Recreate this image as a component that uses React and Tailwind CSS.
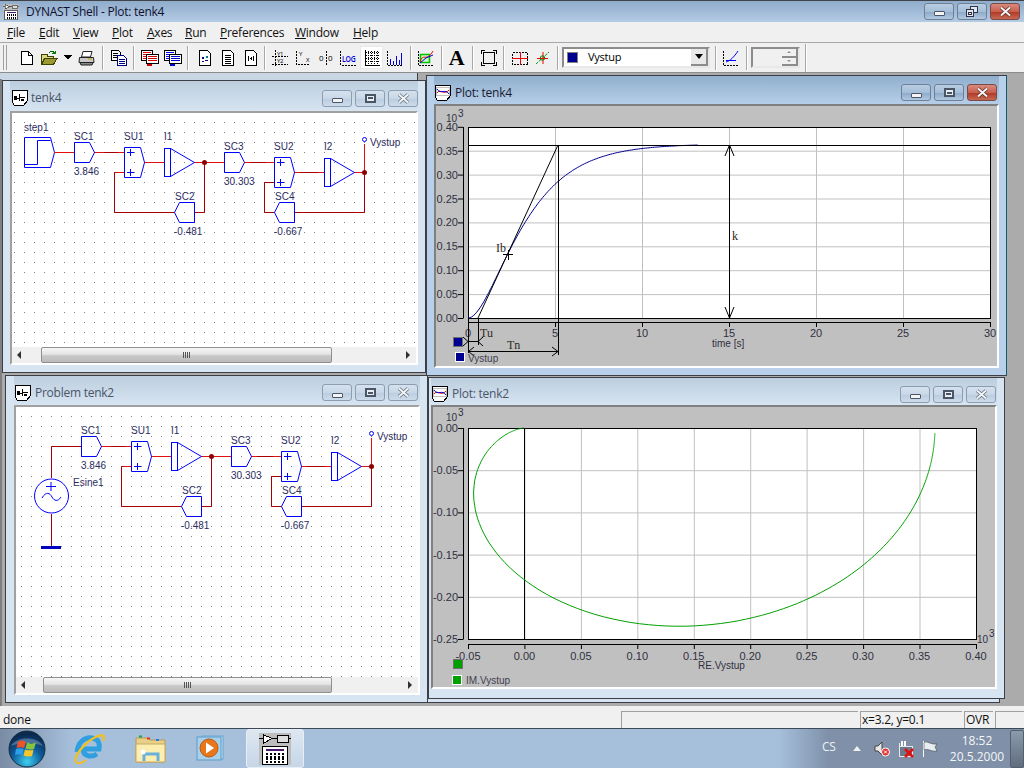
import React from 'react';

const K = 0.364;
const T1 = 2.08;
const T2 = 1.5;

// step response of the two lags, drawn in screen coordinates of the plot
const stepPath = () => {
  let d = '';
  for (let t = 0; t <= 13.2; t += 0.1) {
    const y = K * (1 - (T1 * Math.exp(-t / T1) - T2 * Math.exp(-t / T2)) / (T1 - T2));
    d += `${d ? 'L' : 'M'}${(468 + t * 17.4).toFixed(1)} ${(318 - y * 478).toFixed(1)}`;
  }
  return d;
};

// frequency response for the Nyquist plot
const nyquistPath = () => {
  let d = '';
  for (let lw = Math.log(0.0046); lw <= Math.log(30); lw += 0.03) {
    const w = Math.exp(lw);
    const re = 1 - T1 * T2 * w * w;
    const im = (T1 + T2) * w;
    const m = re * re + im * im;
    const gr = (K * re) / m;
    const gi = (-K * im) / m;
    d += `${d ? 'L' : 'M'}${(524 + gr * 1129).toFixed(1)} ${(428 - gi * 844).toFixed(1)}`;
  }
  return d;
};

const Ico = ({ children, w = 16, h = 16 }) => (
  <svg width={w} height={h} viewBox={`0 0 ${w} ${h}`} shapeRendering="crispEdges">{children}</svg>
);

const Btn = ({ children, active }) => (
  <div className={active ? 'w-[23px] h-[23px] flex items-center justify-center bg-white border border-[#e8e8e8]' : 'w-[23px] h-[23px] flex items-center justify-center'}>
    {children}
  </div>
);

const Sep = ({ className }) => <div className={`w-px h-[24px] bg-[#a8a8a8] border-r border-white box-content ${className}`} />;

const Page = ({ lines }) => (
  <g>
    <path d="M2.5 .5H10.5L13.5 3.5V15.5H2.5Z" fill="#fff" stroke="#000" />
    {lines}
  </g>
);

const Lines = ({ color, x = 5, n = 4, w = 6 }) => (
  <g stroke={color}>
    {Array.from({ length: n }).map((_, i) => (
      <path key={i} d={`M${x} ${5.5 + i * 2}h${w}`} />
    ))}
  </g>
);

const StackDoc = ({ color, dark }) => (
  <Ico w={18} h={16}>
    <path d="M.5 .5H11.5V10.5H.5Z" fill="#fff" stroke="#000" />
    <g stroke={color}><path d="M2 2.5H10M2 4.5H10M2 6.5H10M2 8.5H10" /></g>
    <path d="M5.5 4.5H17.5V13.5H5.5Z" fill="#fff" stroke="#000" />
    <g stroke={dark}><path d="M7 6.5H16M7 8.5H16M7 10.5H16" /></g>
    <path d="M6 14h5v2H6z" fill={dark} />
  </Ico>
);

const ToolIcons = {
  New: () => (
    <Ico><path d="M2.5 1.5H9.5L13.5 5.5V14.5H2.5Z" fill="#fff" stroke="#000" /><path d="M9.5 1.5V5.5H13.5" fill="none" stroke="#000" /></Ico>
  ),
  Open: () => (
    <Ico w={17} h={16}>
      <path d="M.5 4.5H6.5V6.5H12.5V14.5H.5Z" fill="#d8d880" stroke="#404000" />
      <path d="M3.5 8.5H16L12.5 14.5H.5Z" fill="#9a9a30" stroke="#404000" />
      <path d="M8 3C9 1 12 1 13 2.5" fill="none" stroke="#006000" />
      <path d="M11 3.5h4v-3z" fill="#008000" />
    </Ico>
  ),
  Drop: () => <Ico w={8} h={5}><path d="M0 0H8L4 5Z" fill="#000" /></Ico>,
  Print: () => (
    <svg width="17" height="16" viewBox="0 0 17 16">
      <path d="M5 1.5H14L12.5 7H3.5Z" fill="#fff" stroke="#222" />
      <path d="M1.5 7.5H15.5L16 12.5H1Z" fill="#c8c8c8" stroke="#222" />
      <path d="M2 12.5H15L14 15H3Z" fill="#888" stroke="#222" />
      <path d="M10 9h4" stroke="#c8a000" />
    </svg>
  ),
  Copy: () => (
    <Ico>
      <path d="M.5 .5H7.5L9.5 2.5V10.5H.5Z" fill="#fff" stroke="#000" />
      <path d="M2 3.5H7M2 5.5H7M2 7.5H7" stroke="#000" />
      <path d="M6.5 5.5H12.5L15.5 8.5V15.5H6.5Z" fill="#fff" stroke="#000081" />
      <path d="M8 9.5H14M8 11.5H14M8 13.5H14" stroke="#000081" />
    </Ico>
  ),
  Red: () => <StackDoc color="#ff0000" dark="#d00000" />,
  Blue: () => <StackDoc color="#0000ff" dark="#0000d0" />,
  D1: () => (
    <Ico><Page lines={<g><path d="M5 7h2v2H5zM8 10h3v1H8zM5 11h2v1H5z" fill="#0a0a80" /><path d="M9 6h2v2H9z" fill="#008080" /></g>} /></Ico>
  ),
  D2: () => <Ico><Page lines={<Lines color="#000" n={5} />} /></Ico>,
  D3: () => (
    <Ico><Page lines={<path d="M5.5 6V11M10.5 6V11M7 8.5H9M8 7V10" stroke="#000" fill="none" />} /></Ico>
  ),
  Y1Y2: () => (
    <svg width="16" height="16" viewBox="0 0 16 16" shapeRendering="crispEdges">
      <path d="M0 6.5H16M0 14.5H16M3.5 0V16" stroke="#000" strokeDasharray="2 1" />
      <text x="5" y="5.5" fontSize="6" fill="#000">Y1</text>
      <text x="5" y="13" fontSize="6" fill="#000">Y2</text>
    </svg>
  ),
  Axes: () => (
    <svg width="16" height="16" viewBox="0 0 16 16" shapeRendering="crispEdges">
      <path d="M1.5 1V14.5H15" stroke="#000" fill="none" strokeDasharray="2 1" />
      <text x="4" y="6" fontSize="6" fill="#000">Y</text>
      <text x="11" y="12" fontSize="6" fill="#000">X</text>
    </svg>
  ),
  Zero: () => (
    <svg width="16" height="16" viewBox="0 0 16 16" shapeRendering="crispEdges">
      <path d="M8.5 1V15" stroke="#000" strokeDasharray="2 1" />
      <text x="1" y="11" fontSize="8" fill="#000">0</text>
      <text x="10" y="11" fontSize="8" fill="#000">0</text>
    </svg>
  ),
  Log: () => (
    <svg width="18" height="16" viewBox="0 0 18 16">
      <path d="M.5 1V15H17" stroke="#000" fill="none" strokeDasharray="2 1" shapeRendering="crispEdges" />
      <text transform="translate(2,12) scale(.72,1)" fontSize="9.5" fontWeight="600" fill="#0000e0">LOG</text>
    </svg>
  ),
  Grid: () => (
    <Ico>
      <path d="M1.5 0V15.5H16" stroke="#000" fill="none" />
      <g stroke="#000" strokeDasharray="1 1">
        <path d="M4.5 1V15M7.5 1V15M10.5 1V15M13.5 1V15" />
        <path d="M2 2.5H16M2 5.5H16M2 8.5H16M2 11.5H16" />
      </g>
    </Ico>
  ),
  Bars: () => (
    <Ico>
      <path d="M.5 1V15.5H16" stroke="#000" fill="none" strokeDasharray="2 1" />
      <path d="M3.5 9V15M6.5 11V15M9.5 6V15M12.5 10V15M14.5 3V15" stroke="#0000e0" strokeWidth="1.5" fill="none" />
    </Ico>
  ),
  Color: () => (
    <svg width="16" height="16" viewBox="0 0 16 16">
      <path d="M.5 1V15.5H16" stroke="#000" fill="none" strokeDasharray="2 1" shapeRendering="crispEdges" />
      <path d="M2.500 4.500H11.500V12.500H2.500Z" fill="#c8f8c8" stroke="#00c000" strokeWidth="1.5" />
      <path d="M2 12C5 2 8 13 15 1" stroke="#ff0000" fill="none" />
      <path d="M2 13L8 8L15 5" stroke="#0000e0" fill="none" />
    </svg>
  ),
  Frame: () => (
    <Ico>
      <path d="M2.5 2.5H13.5V13.5H2.5Z" fill="none" stroke="#000" strokeWidth="1" />
      <path d="M0 0h4v1H1v3H0zM12 0h4v4h-1V1h-3zM0 12h1v3h3v1H0zM15 12h1v4h-4v-1h3z" fill="#000" />
    </Ico>
  ),
  Cross: () => (
    <Ico>
      <path d="M.5 2.5H15.5V14.5H.5Z" fill="none" stroke="#000" strokeDasharray="2 1" />
      <path d="M8 2V15M0 8.5H16" stroke="#f00000" strokeWidth="1" />
    </Ico>
  ),
  Mark: () => (
    <svg width="14" height="14" viewBox="0 0 14 14">
      <path d="M0 13L13 1" stroke="#00a000" strokeDasharray="3 1" />
      <path d="M1 7.5H12M7 1V13" stroke="#ff0000" />
      <circle cx="6.5" cy="7" r="2.2" fill="none" stroke="#008000" />
    </svg>
  ),
  Slope: () => (
    <svg width="16" height="16" viewBox="0 0 16 16">
      <path d="M.5 1V15.5H16" stroke="#000" fill="none" strokeDasharray="2 1" shapeRendering="crispEdges" />
      <path d="M3 12C7 11 11 7 15 1" stroke="#0000ff" fill="none" />
      <path d="M3 10.5H13" stroke="#0000ff" />
    </svg>
  ),
};

const TitleIcon = ({ plot }) => (
  <svg width="16" height="16" viewBox="0 0 16 16" className="shrink-0" shapeRendering="crispEdges">
    <path d="M.5 .5H15.5V10.5L11.5 15.5H2.5L.5 12.5Z" fill="#fff" stroke="#000" />
    {plot ? (
      <g fill="none">
        <rect x="1.500" y="2.500" width="13" height="8" stroke="#c0c0c0" />
        <path d="M2 8C5 3 9 11 14 5" stroke="#e00000" shapeRendering="auto" />
        <path d="M2 4C6 10 10 3 14 9" stroke="#0000d0" shapeRendering="auto" />
      </g>
    ) : (
      <path d="M2 6h3v2h2V4h1v3h5v1H8v3H7V8.500H5V10H2zM9 9h3v2H9z" fill="#000" />
    )}
  </svg>
);

const CapButton = ({ kind, on }) => {
  const isClose = kind === 'close' && on;
  const cls = isClose
    ? 'w-[30px] h-[17px] rounded-[3px] border border-[#7a4a48] bg-[linear-gradient(180deg,#d98a7e_0%,#c9604f_50%,#b23a28_55%,#c46a52_100%)] flex items-center justify-center'
    : on
      ? 'w-[30px] h-[17px] rounded-[3px] border border-[#6f8094] bg-[linear-gradient(180deg,#b9cde2_0%,#a5bed9_50%,#8fabc9_55%,#b0c8e2_100%)] flex items-center justify-center'
      : 'w-[30px] h-[17px] rounded-[3px] border border-[#8d9db0] bg-[linear-gradient(180deg,#d5e1ee_0%,#c8d7e7_50%,#bccde0_55%,#cddcec_100%)] flex items-center justify-center';
  return (
    <div className={cls}>
      {kind === 'min' && <div className="w-[11px] h-[5px] mt-[5px] rounded-[1px] bg-[#f4f4f4] border border-[#4a5666]" />}
      {kind === 'max' && (
        <div className="w-[11px] h-[9px] border-2 border-[#4a5666] bg-[#e8eef4] flex items-center justify-center">
          <div className="w-[5px] h-[2px] bg-[#4a5666]" />
        </div>
      )}
      {kind === 'restore' && (
        <svg width="12" height="11" viewBox="0 0 12 11" shapeRendering="crispEdges">
          <path d="M4.5 .5H11.5V6.5H4.5Z" fill="#dfe8f2" stroke="#334" />
          <path d="M.5 3.5H7.5V10.5H.5Z" fill="#dfe8f2" stroke="#334" />
          <path d="M2.5 6.5H5.5V8.5H2.5Z" fill="none" stroke="#334" />
        </svg>
      )}
      {kind === 'close' && (
        <svg width="13" height="11" viewBox="0 0 13 11">
          <path d="M2 1.5L11 9.5M11 1.5L2 9.5" stroke={on ? '#5a2a22' : '#5a6a7a'} strokeWidth="3.4" />
          <path d="M2 1.5L11 9.5M11 1.5L2 9.5" stroke="#f4f4f4" strokeWidth="2" />
        </svg>
      )}
    </div>
  );
};

const MdiWindow = ({ className, bar, on, plot, title, textMl, children }) => (
  <div className={`absolute border border-[#3c4046] flex flex-col ${on ? 'bg-[#b8d0ea] border-r-[#0f5c70]' : 'bg-[#d7e4f2]'} ${className}`}>
    <div className={`shrink-0 flex items-center ${on ? 'bg-[linear-gradient(180deg,#90afce_0%,#b6cee8_100%)]' : 'bg-[linear-gradient(180deg,#bccede_0%,#d7e4f2_100%)]'} ${bar}`}>
      <TitleIcon plot={plot} />
      <span className={`text-[12px] ${textMl} ${on ? 'text-[#1a1a30]' : 'text-[#4a5568]'}`}>{title}</span>
      <div className="ml-auto flex gap-[3px]">
        <CapButton kind="min" on={on} />
        <CapButton kind="max" on={on} />
        <CapButton kind="close" on={on} />
      </div>
    </div>
    {children}
  </div>
);

const ScrollBar = ({ lead, thumb }) => (
  <div className="shrink-0 h-[16px] flex items-center bg-[#f0f0f0] relative">
    <div className={`${lead} flex justify-start pl-[5px]`}>
      <div className="w-0 h-0 border-y-[4px] border-y-transparent border-r-[4px] border-r-[#303030]" />
    </div>
    <div className={`${thumb} h-[16px] rounded-[2px] border border-[#8f8f8f] bg-[linear-gradient(180deg,#f6f6f6_0%,#e4e4e4_45%,#c8c8c8_55%,#bcbcbc_100%)] flex items-center justify-center gap-px`}>
      <div className="w-px h-[6px] bg-[#555]" />
      <div className="w-px h-[6px] bg-[#555]" />
      <div className="w-px h-[6px] bg-[#555]" />
      <div className="w-px h-[6px] bg-[#555]" />
    </div>
    <div className="ml-auto w-[16px] flex justify-center">
      <div className="w-0 h-0 border-y-[4px] border-y-transparent border-l-[4px] border-l-[#303030]" />
    </div>
  </div>
);

const Txt = ({ x, y, children, fill = '#2c2c60', size = 10, anchor }) => (
  <text x={x} y={y} fontSize={size} fill={fill} textAnchor={anchor}>{children}</text>
);

const BLUE = '#0000ff';
const DARK = '#a80000';
const RED = '#e01010';

const blockOut = (x, y) => `${x + 0.5},${y + 0.5} ${x + 15.5},${y + 0.5} ${x + 20.5},${y + 10.5} ${x + 15.5},${y + 20.5} ${x + 0.5},${y + 20.5}`;
const blockIn = (x, y) => `${x + 20.5},${y + 0.5} ${x + 5.5},${y + 0.5} ${x + 0.5},${y + 10.5} ${x + 5.5},${y + 20.5} ${x + 20.5},${y + 20.5}`;

const Summer = ({ x, y }) => (
  <g>
    <polygon points={`${x + 0.5},${y + 0.5} ${x + 16.5},${y + 0.5} ${x + 20.5},${y + 15.5} ${x + 16.5},${y + 30.5} ${x + 0.5},${y + 30.5}`} fill="none" stroke={BLUE} />
    <path d={`M${x + 3} ${y + 5.5}h7M${x + 6.5} ${y + 2}v7M${x + 3} ${y + 25.5}h7M${x + 6.5} ${y + 22}v7`} stroke={BLUE} />
  </g>
);

const Integrator = ({ x, y }) => (
  <g fill="none" stroke={BLUE}>
    <rect x={x + 0.5} y={y + 0.5} width="6" height="28" />
    <path d={`M${x + 6.5} ${y + 0.5}L${x + 30.5} ${y + 14.5}L${x + 6.5} ${y + 28.5}`} />
  </g>
);

// shared part of both block diagrams; coordinates are those of the tenk4 window
const Loop = () => (
  <g>
    <path d="M94 152.5H124M144 162.5H164M194 162.5H224M244 162.5H274M294 172.5H324M354 172.5H364" stroke={RED} fill="none" />
    <path d="M104 152.5H118M250 162.5H266M300 172.5H318" stroke={DARK} fill="none" />
    <path d="M124 172.5H114.5V212.5H174M194 212.5H204.5V162.5M274 182.5H264.5V212.5H274M294 212.5H364.5V172.5" stroke={DARK} fill="none" />
    <path d="M124 172.5H116M364.5 172V144" stroke={RED} fill="none" />
    <circle cx="204.5" cy="162.5" r="2.5" fill="#8a0000" />
    <circle cx="364.5" cy="172.5" r="2.5" fill="#8a0000" />
    <circle cx="364.5" cy="139.5" r="2" fill="#fff" stroke={BLUE} />
    <polygon points={blockOut(74, 142)} fill="none" stroke={BLUE} />
    <Summer x={124} y={147} />
    <Integrator x={164} y={148} />
    <polygon points={blockOut(224, 152)} fill="none" stroke={BLUE} />
    <Summer x={274} y={157} />
    <Integrator x={324} y={158} />
    <polygon points={blockIn(174, 202)} fill="none" stroke={BLUE} />
    <polygon points={blockIn(274, 202)} fill="none" stroke={BLUE} />
    <Txt x={74} y={140}>SC1</Txt>
    <Txt x={74} y={175}>3.846</Txt>
    <Txt x={124} y={140}>SU1</Txt>
    <Txt x={164} y={140}>I1</Txt>
    <Txt x={175} y={200}>SC2</Txt>
    <Txt x={174} y={235}>-0.481</Txt>
    <Txt x={224} y={150}>SC3</Txt>
    <Txt x={224} y={185}>30.303</Txt>
    <Txt x={274} y={150}>SU2</Txt>
    <Txt x={324} y={150}>I2</Txt>
    <Txt x={275} y={200}>SC4</Txt>
    <Txt x={274} y={235}>-0.667</Txt>
    <Txt x={370} y={146}>Vystup</Txt>
  </g>
);

const DiagramOne = () => (
  <svg className="block w-full flex-1 min-h-0 font-['Liberation_Sans'] tracking-normal">
    <defs>
      <pattern id="dotsA" x="4" y="2" width="10" height="10" patternUnits="userSpaceOnUse">
        <rect width="1" height="1" fill="#808080" />
      </pattern>
    </defs>
    <g transform="translate(-12,-113)">
      <rect x="12" y="113" width="410" height="240" fill="url(#dotsA)" />
      <polygon points="24.5,137.5 50.5,137.5 54.5,152.5 50.5,167.5 24.5,167.5" fill="#fff" stroke={BLUE} />
      <path d="M24.5 164.5H37.5V140.5H50.5" fill="none" stroke={BLUE} />
      <path d="M54 152.5H74" stroke={RED} />
      <Txt x={24} y={131}>step1</Txt>
      <Loop />
    </g>
  </svg>
);

const DiagramTwo = () => (
  <svg className="block w-full flex-1 min-h-0 font-['Liberation_Sans'] tracking-normal">
    <defs>
      <pattern id="dotsB" x="1" y="6" width="10" height="10" patternUnits="userSpaceOnUse">
        <rect width="1" height="1" fill="#808080" />
      </pattern>
    </defs>
    <g transform="translate(-16,-407)">
      <rect x="16" y="407" width="410" height="280" fill="url(#dotsB)" />
      <path d="M51.5 478V446.5H81M51.5 514V546" fill="none" stroke={DARK} />
      <circle cx="51.5" cy="496" r="17" fill="#fff" stroke={BLUE} />
      <path d="M46 486.5h10M51 482v9" stroke={BLUE} />
      <path d="M42 498C46 491 50 493 52 497C54 501 58 502 61 497" fill="none" stroke={BLUE} />
      <rect x="41" y="546" width="20" height="3" fill="#0000c0" />
      <Txt x={73} y={486}>Esine1</Txt>
      <g transform="translate(7,294)">
        <Loop />
      </g>
    </g>
  </svg>
);

const GRID = '#c0c0c0';

const PlotOne = () => {
  const xs = [0, 5, 10, 15, 20, 25, 30];
  const ys = ['0.00', '0.05', '0.10', '0.15', '0.20', '0.25', '0.30', '0.35', '0.40'];
  return (
    <svg className="block w-full h-full font-['Liberation_Sans'] tracking-normal">
      <g transform="translate(-436,-106)">
        <rect x="468.5" y="127.5" width="522" height="191" fill="#fff" />
        {xs.map((v) => (
          <g key={v}>
            <path d={`M${468.5 + v * 17.4} 127V318`} stroke={GRID} strokeWidth="1" />
            <path d={`M${468.5 + v * 17.4} 322V327`} stroke="#000" />
            <Txt x={468 + v * 17.4} y={337} size={11} fill="#303040" anchor="middle">{v}</Txt>
          </g>
        ))}
        {ys.map((v, i) => (
          <g key={v}>
            <path d={`M468 ${318.5 - i * 23.9}H990`} stroke={GRID} />
            <path d={`M458 ${318.5 - i * 23.9}H463`} stroke="#000" />
            <Txt x={458} y={322 - i * 23.9} size={11} fill="#303040" anchor="end">{v}</Txt>
          </g>
        ))}
        <rect x="468.5" y="127.5" width="522" height="191" fill="none" stroke="#000" />
        <path d="M463.5 127V318.5M468 322.5H990.5" stroke="#000" fill="none" />
        <path d={stepPath()} fill="none" stroke="#000090" />
        <path d="M468 145.5H990" stroke="#000" />
        <path d="M478 318L558 145" stroke="#000" fill="none" />
        <path d="M558.5 145V355M729.5 145V318M478.5 318V345M468.5 318V353" stroke="#000" fill="none" />
        <path d="M468 341.5H478M468 351.5H558M503 254.5H513M508.5 250V260" stroke="#000" />
        <path d="M725 156L729.5 145L734 156M725 307L729.5 318L734 307" fill="none" stroke="#000" />
        <path d="M463 337L468 341.5L463 346M483 337L478 341.5L483 346M474 347L468.5 351.5L474 356M552 347L558 351.5L552 356" fill="none" stroke="#000" />
        <Txt x={480} y={337} size={12} fill="#302818"><tspan fontFamily="'Liberation Serif'">Tu</tspan></Txt>
        <Txt x={507} y={349} size={12} fill="#302818"><tspan fontFamily="'Liberation Serif'">Tn</tspan></Txt>
        <Txt x={496} y={252} size={12} fill="#302818"><tspan fontFamily="'Liberation Serif'">Ib</tspan></Txt>
        <Txt x={732} y={240} size={12} fill="#302818"><tspan fontFamily="'Liberation Serif'">k</tspan></Txt>
        <Txt x={712} y={347} size={10} fill="#303040">time [s]</Txt>
        <Txt x={446} y={122} size={10} fill="#303040">10</Txt>
        <Txt x={458} y={117} size={10} fill="#303040">3</Txt>
        <rect x="453.5" y="337.5" width="9" height="9" fill="#000090" stroke="#707070" />
        <rect x="455.5" y="352.5" width="9" height="9" fill="#000090" stroke="#fff" />
        <Txt x={468} y={362} size={10} fill="#404050">Vystup</Txt>
      </g>
    </svg>
  );
};

const PlotTwo = () => {
  const xs = ['-0.05', '0.00', '0.05', '0.10', '0.15', '0.20', '0.25', '0.30', '0.35', '0.40'];
  const ys = ['0.00', '-0.05', '-0.10', '-0.15', '-0.20', '-0.25'];
  return (
    <svg className="block w-full h-full font-['Liberation_Sans'] tracking-normal">
      <g transform="translate(-433,-407)">
        <rect x="468.5" y="428.5" width="508" height="211" fill="#fff" />
        {xs.map((v, i) => (
          <g key={v}>
            <path d={`M${(468.5 + i * 56.44).toFixed(1)} 428V639`} stroke={GRID} />
            <path d={`M${(468.5 + i * 56.44).toFixed(1)} 644V649`} stroke="#000" />
            <Txt x={468 + i * 56.44} y={660} size={11} fill="#303040" anchor="middle">{v}</Txt>
          </g>
        ))}
        {ys.map((v, i) => (
          <g key={v}>
            <path d={`M468 ${428.5 + i * 42.2}H976`} stroke={GRID} />
            <path d={`M458 ${428.5 + i * 42.2}H463`} stroke="#000" />
            <Txt x={458} y={432 + i * 42.2} size={11} fill="#303040" anchor="end">{v}</Txt>
          </g>
        ))}
        <rect x="468.5" y="428.5" width="508" height="211" fill="none" stroke="#000" />
        <path d="M463.5 428V639.5M468 644.5H976.5M524.5 428V639" stroke="#000" fill="none" />
        <path d={nyquistPath()} fill="none" stroke="#00a000" />
        <Txt x={446} y={421} size={10} fill="#303040">10</Txt>
        <Txt x={458} y={416} size={10} fill="#303040">3</Txt>
        <Txt x={977} y={643} size={10} fill="#303040">10</Txt>
        <Txt x={989} y={637} size={10} fill="#303040">3</Txt>
        <Txt x={698} y={669} size={10} fill="#303040">RE.Vystup</Txt>
        <rect x="453.5" y="659.5" width="9" height="9" fill="#00a000" stroke="#707070" />
        <rect x="452.5" y="675.5" width="9" height="9" fill="#00a000" stroke="#fff" />
        <Txt x={466} y={684} size={10} fill="#404050">IM.Vystup</Txt>
      </g>
    </svg>
  );
};

const AppIcon = ({ size = 16 }) => (
  <svg width={size} height={size} viewBox="0 0 32 32" shapeRendering="crispEdges">
    <rect width="32" height="32" fill="#bdbdbd" />
    <path d="M0 5.5H8M13 5.5H18M29 5.5H32" stroke="#000" />
    <path d="M4 1.5V10.5L13 5.5Z" fill="#fff" stroke="#000" />
    <rect x="18" y="2" width="11" height="7" fill="#ddd" stroke="#000" />
    <rect x="3.5" y="13.5" width="25" height="18" fill="#fff" stroke="#000" />
    <rect x="7" y="16" width="18" height="2" fill="#4a1a6a" />
    {[0, 1, 2, 3].map((r) =>
      [0, 1, 2, 3, 4].map((c) => <rect key={`${r}${c}`} x={7 + c * 4} y={20 + r * 2.6} width="2" height="2" fill="#000" />)
    )}
  </svg>
);

const StartOrb = () => (
  <svg width="38" height="38" viewBox="0 0 38 38">
    <defs>
      <radialGradient id="orb" cx="50%" cy="85%" r="75%">
        <stop offset="0%" stopColor="#3fd0f0" />
        <stop offset="55%" stopColor="#0f5c9c" />
        <stop offset="100%" stopColor="#0a2a50" />
      </radialGradient>
    </defs>
    <circle cx="19" cy="19" r="18" fill="url(#orb)" stroke="#16303f" />
    <path d="M3 16C8 6 30 6 35 16C26 12 12 12 3 16Z" fill="#ffffff" fillOpacity="0.25" />
    <path d="M10 12C13 10 15 11 18 12L16 18C14 17 11 17 8.5 18Z" fill="#f0522a" />
    <path d="M19 12.5C22 14 25 14 28 12.5L26 19C23 20 20 19.5 17.5 18.5Z" fill="#86c440" />
    <path d="M8 19C11 18 13.500 18.200 15.500 19L14 25C12 24 9.500 24 7 25Z" fill="#2f9ee8" />
    <path d="M17 19.500C20 20.500 23 20.500 25.500 20L24 26C21.500 27 18 26.500 15.500 25.500Z" fill="#f8c52a" />
  </svg>
);

const IeIcon = () => (
  <svg width="32" height="32" viewBox="0 0 32 32">
    <path d="M4 19C5 9 12 4 19 5C26 6 27 11 26 16H10C10 23 18 25 24 21" fill="none" stroke="#2f9fe0" strokeWidth="5" />
    <path d="M3 29C0 24 12 8 25 3C30 1 32 3 30 8" fill="none" stroke="#f2c020" strokeWidth="2.4" />
    <path d="M3 29C5 31 9 30 13 27" fill="none" stroke="#f2c020" strokeWidth="2" />
  </svg>
);

const FolderIcon = () => (
  <svg width="32" height="30" viewBox="0 0 32 30">
    <path d="M1 4H13L15 6H30V28H1Z" fill="#e8cf8a" stroke="#b89a50" />
    <rect x="4" y="1.5" width="3" height="2" fill="#20a040" />
    <rect x="12" y="3.500" width="3" height="2" fill="#d04020" />
    <rect x="21" y="5" width="3" height="2" fill="#2080e0" />
    <path d="M1 10H30V28H1Z" fill="#fbeeb0" stroke="#c8aa60" />
    <path d="M9 27V20H23V27" fill="none" stroke="#6ab0d8" strokeWidth="3" />
    <circle cx="8" cy="18" r="2.500" fill="#fff" />
  </svg>
);

const MediaIcon = () => (
  <svg width="30" height="28" viewBox="0 0 30 28">
    <rect x="6" y="1" width="21" height="23" fill="#bcdcf0" stroke="#6aa6d0" />
    <rect x="1" y="2" width="24" height="23" fill="#a8d0ea" stroke="#5a9cc8" />
    <circle cx="13" cy="13" r="9" fill="#e8761a" stroke="#b85a10" />
    <path d="M10 7.500L18 13L10 18.500Z" fill="#fff" />
  </svg>
);

const Menu = ({ first, rest, className }) => (
  <span className={className}><span className="underline">{first}</span>{rest}</span>
);

export default function App() {
  return (
    <div className="w-[1024px] h-[768px] overflow-hidden flex flex-col bg-[#f0f0f0] font-['Open_Sans',sans-serif] text-[12px] tracking-[-0.25px] text-black">
      {/* Title bar */}
      <div className="shrink-0 h-[22px] border-t border-[#404448] flex items-center pl-[3px] pr-[4px] bg-[linear-gradient(180deg,#8faccb_0%,#b4cbe4_100%)]">
        <AppIcon />
        <span className="ml-[7px] text-[12px] text-[#101030]">DYNAST Shell - Plot: tenk4</span>
        <div className="ml-auto flex gap-[3px] mb-[1px]">
          <CapButton kind="min" on />
          <CapButton kind="restore" on />
          <CapButton kind="close" on />
        </div>
      </div>

      {/* Menu */}
      <div className="shrink-0 h-[21px] flex items-center border-b border-[#a8a8a8] pl-[7px] pt-px text-[12px] text-[#101010]">
        <Menu first="F" rest="ile" className="w-[32px]" />
        <Menu first="E" rest="dit" className="w-[34px]" />
        <Menu first="V" rest="iew" className="w-[39px]" />
        <Menu first="P" rest="lot" className="w-[35px]" />
        <Menu first="A" rest="xes" className="w-[38px]" />
        <Menu first="R" rest="un" className="w-[35px]" />
        <Menu first="P" rest="references" className="w-[75px]" />
        <Menu first="W" rest="indow" className="w-[58px]" />
        <Menu first="H" rest="elp" />
      </div>

      {/* Toolbar */}
      <div className="shrink-0 h-[30px] flex items-center border-b border-[#8c8c8c]">
        <div className="ml-[3px] w-[4px] h-[25px] border-x border-[#a0a0a0]" />
        <div className="ml-[8px]"><Btn><ToolIcons.New /></Btn></div>
        <Btn><ToolIcons.Open /></Btn>
        <div className="w-[14px] flex justify-center"><ToolIcons.Drop /></div>
        <Btn><ToolIcons.Print /></Btn>
        <Sep className="ml-[4px] mr-[3px]" />
        <Btn><ToolIcons.Copy /></Btn>
        <Sep className="ml-[3px] mr-[3px]" />
        <Btn><ToolIcons.Red /></Btn>
        <Btn><ToolIcons.Blue /></Btn>
        <Sep className="ml-[3px] mr-[4px]" />
        <Btn><ToolIcons.D1 /></Btn>
        <Btn><ToolIcons.D2 /></Btn>
        <Btn><ToolIcons.D3 /></Btn>
        <Sep className="ml-[2px] mr-[2px]" />
        <Btn><ToolIcons.Y1Y2 /></Btn>
        <Btn><ToolIcons.Axes /></Btn>
        <Btn><ToolIcons.Zero /></Btn>
        <Btn><ToolIcons.Log /></Btn>
        <Btn active><ToolIcons.Grid /></Btn>
        <Btn><ToolIcons.Bars /></Btn>
        <Sep className="ml-[4px] mr-[2px]" />
        <Btn><ToolIcons.Color /></Btn>
        <Sep className="ml-[4px] mr-[2px]" />
        <Btn><span className="font-['Liberation_Serif'] font-bold text-[22px] leading-[23px]">A</span></Btn>
        <Sep className="ml-[4px] mr-[3px]" />
        <Btn><ToolIcons.Frame /></Btn>
        <Sep className="ml-[3px] mr-[3px]" />
        <Btn><ToolIcons.Cross /></Btn>
        <Btn><ToolIcons.Mark /></Btn>
        <Sep className="ml-[3px] mr-[3px]" />
        <div className="w-[148px] h-[21px] flex items-center bg-white border-2 border-t-[#8c8c8c] border-l-[#8c8c8c] border-r-[#e8e8e8] border-b-[#e8e8e8]">
          <div className="ml-[3px] w-[9px] h-[9px] bg-[#000090] border border-[#808080] box-content" />
          <span className="ml-[10px] text-[11px]">Vystup</span>
          <div className="ml-auto w-[17px] h-[17px] flex items-center justify-center bg-[#e8e8e8] border-r-2 border-b-2 border-[#8c8c8c]">
            <div className="w-0 h-0 border-x-[4px] border-x-transparent border-t-[5px] border-t-black" />
          </div>
        </div>
        <Sep className="ml-[5px] mr-[2px]" />
        <Btn><ToolIcons.Slope /></Btn>
        <Sep className="ml-[4px] mr-[3px]" />
        <div className="w-[49px] h-[21px] flex justify-end bg-[#f0f0f0] border-2 border-t-[#8c8c8c] border-l-[#8c8c8c] border-r-[#e8e8e8] border-b-[#e8e8e8]">
          <div className="w-[16px] flex flex-col">
            <div className="flex-1 flex items-center justify-center bg-[#f0f0f0] border-b-2 border-r-2 border-[#8c8c8c]">
              <div className="w-0 h-0 border-x-[2px] border-x-transparent border-b-[2px] border-b-[#909090]" />
            </div>
            <div className="flex-1 flex items-center justify-center bg-[#f0f0f0] border-b-2 border-r-2 border-[#8c8c8c]">
              <div className="w-0 h-0 border-x-[2px] border-x-transparent border-t-[2px] border-t-[#909090]" />
            </div>
          </div>
        </div>
        <Sep className="ml-[5px] h-[28px]" />
      </div>

      {/* MDI area, child windows sit on a free canvas */}
      <div className="relative flex-1 min-h-0 bg-[#ababab] overflow-hidden">
        <div className="absolute left-0 top-0 w-[418px] h-[40px] bg-[#c9d6e3] border-r border-[#3c4046]" />
        <div className="absolute left-0 top-[6px] w-[2px] h-[627px] bg-[#808080]" />
        <div className="absolute left-[420px] top-[550px] w-[580px] h-[80px] bg-[#d7e4f2] border-r border-b border-[#3c4046]" />

        <MdiWindow className="left-[2px] top-[7px] w-[424px] h-[293px] px-[7px] pb-[7px]" bar="h-[30px] pl-[2px] pt-[4px]" plot={false} title="tenk4" textMl="ml-[3px]">
          <div className="flex-1 min-h-0 flex flex-col bg-white border-2 border-t-[#a0a0a0] border-l-[#a0a0a0] border-r-white border-b-white">
            <DiagramOne />
            <ScrollBar lead="w-[29px]" thumb="w-[291px]" />
          </div>
        </MdiWindow>

        <MdiWindow className="left-[5px] top-[302px] w-[423px] h-[328px] pl-[8px] pr-[7px] pb-[7px]" bar="h-[29px] pl-px pr-[2px] pt-[4px]" plot={false} title="Problem tenk2" textMl="ml-[4px]">
          <div className="flex-1 min-h-0 flex flex-col bg-white border-2 border-t-[#a0a0a0] border-l-[#a0a0a0] border-r-white border-b-white">
            <DiagramTwo />
            <ScrollBar lead="w-[27px]" thumb="w-[289px]" />
          </div>
        </MdiWindow>

        <MdiWindow className="left-[428px] top-[304px] w-[577px] h-[322px] pl-[2px] pr-[7px] pb-[9px]" bar="h-[27px] pl-px pr-px pt-[5px]" plot title="Plot: tenk2" textMl="ml-[4px]">
          <div className="flex-1 min-h-0 bg-[#c0c0c0] border-2 border-t-[#808080] border-l-[#808080] border-r-white border-b-white">
            <PlotTwo />
          </div>
        </MdiWindow>

        <MdiWindow on className="left-[426px] top-[2px] w-[581px] h-[301px] px-[7px] pb-[7px]" bar="h-[28px] pl-px pr-[2px] pt-[5px]" plot title="Plot: tenk4" textMl="ml-[4px]">
          <div className="flex-1 min-h-0 bg-[#c0c0c0] border-2 border-t-[#808080] border-l-[#808080] border-r-white border-b-white">
            <PlotOne />
          </div>
        </MdiWindow>
      </div>

      {/* Status bar */}
      <div className="shrink-0 h-[22px] flex items-end bg-[#f0f0f0] text-[12px] text-[#101010]">
        <span className="ml-[3px] leading-[17px]">done</span>
        <div className="ml-auto w-[237px] h-[17px] border-t border-l border-[#a0a0a0]" />
        <div className="ml-[2px] w-[102px] h-[17px] border-t border-l border-[#a0a0a0] pl-px leading-[16px]">x=3.2, y=0.1</div>
        <div className="ml-[2px] w-[29px] h-[17px] border-t border-l border-[#a0a0a0] pl-px leading-[16px]">OVR</div>
        <div className="ml-[2px] w-[29px] h-[17px] border-t border-l border-[#a0a0a0]" />
      </div>

      {/* Taskbar */}
      <div className="shrink-0 h-[40px] border-t border-[#3c4a58] flex items-center bg-[linear-gradient(90deg,#7a8ca4_0%,#a6bfdb_7%,#a6bfdb_76%,#7f90a8_81%,#7f90a8_100%)]">
        <div className="w-[54px] flex justify-center"><StartOrb /></div>
        <div className="ml-[4px] w-[62px] flex justify-center"><IeIcon /></div>
        <div className="w-[62px] flex justify-center"><FolderIcon /></div>
        <div className="w-[58px] flex justify-center"><MediaIcon /></div>
        <div className="ml-[6px] w-[58px] h-[39px] flex items-center justify-center rounded-[3px] border border-[#e8eef4] bg-[linear-gradient(180deg,#dde7f1_0%,#c5d6e8_100%)]">
          <AppIcon size={32} />
        </div>
        <div className="ml-auto flex items-center text-white">
          <span className="w-[22px] text-[12px] text-[#eef2f6] mb-[3px]">CS</span>
          <div className="ml-[9px] w-0 h-0 border-x-[4px] border-x-transparent border-b-[5px] border-b-[#f0f0f0]" />
          <svg className="ml-[13px]" width="16" height="16" viewBox="0 0 16 16">
            <path d="M1 5H4L8 1V14L4 10H1Z" fill="#e8e8e8" stroke="#444" />
            <circle cx="11.500" cy="11" r="4" fill="#e03030" stroke="#fff" />
            <path d="M10 9.500L13 12.500M13 9.500L10 12.500" stroke="#fff" />
          </svg>
          <svg className="ml-[8px]" width="16" height="18" viewBox="0 0 16 18" shapeRendering="crispEdges">
            <path d="M1.500 2.500V16.500H14.500V6.500H1.500" fill="#6a7a8a" stroke="#e8e8e8" />
            <path d="M4 1V6M7 1V6" stroke="#fff" strokeWidth="2" />
            <path d="M7 9L15 17M15 9L7 17" stroke="#e01010" strokeWidth="2.500" shapeRendering="auto" />
          </svg>
          <svg className="ml-[8px]" width="16" height="16" viewBox="0 0 16 16">
            <path d="M1.500 0V16" stroke="#fff" />
            <path d="M2 1C6 0 9 4 15 3L13 6L15 10C9 11 6 7 2 9Z" fill="#e8edf2" stroke="#333" strokeWidth=".5" />
          </svg>
          <div className="ml-[7px] w-[64px] flex flex-col items-center text-[12px] leading-[16px] tracking-normal text-[#f4f6f8]">
            <span>18:52</span>
            <span>20.5.2000</span>
          </div>
          <div className="ml-px w-[14px] h-[38px] border border-[#56606c] rounded-[2px] bg-[linear-gradient(180deg,#8c9bac_0%,#5f6d7e_100%)]" />
        </div>
      </div>
    </div>
  );
}
